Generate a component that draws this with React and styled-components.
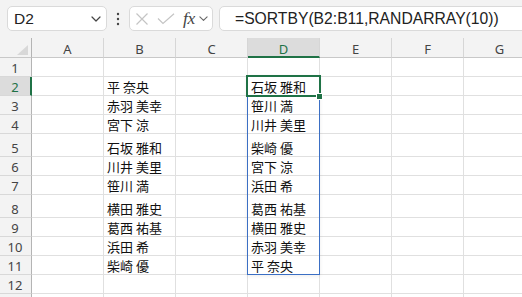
import React from 'react';
import styled, { createGlobalStyle } from 'styled-components';

const GREEN = '#1f7246';
const BLUE = '#3b6fc4';
const GRID = '#e0e0e0';
const HEAD_BG = '#f3f3f3';

const Global = createGlobalStyle`
  html, body { margin: 0; padding: 0; background: ${HEAD_BG}; overflow: hidden; }
  body { font-family: "Noto Sans", "Liberation Sans", sans-serif; }
`;

const Page = styled.div`
  width: 522px;
  height: 297px;
  overflow: hidden;
  background: ${HEAD_BG};
  display: flex;
  flex-direction: column;
`;

const Toolbar = styled.div`
  height: 38px;
  flex: none;
  display: flex;
  align-items: flex-start;
  padding: 6px 0 0 7px;
  box-sizing: border-box;
`;

const Box = styled.div`
  flex: none;
  height: 25px;
  box-sizing: border-box;
  background: #fff;
  border: 1px solid #dadada;
  border-radius: 5px;
  display: flex;
  align-items: center;
`;

const NameBox = styled(Box)`
  width: 100px;
  padding: 0 5px 0 6px;
  justify-content: space-between;
  font-family: "Liberation Sans", Arial, sans-serif;
  font-size: 15.5px;
  color: #222;
`;

const Dots = styled.div`
  flex: none;
  width: 22px;
  height: 25px;
  display: flex;
  align-items: center;
  justify-content: center;
`;

const FxBox = styled(Box)`
  width: 84px;
  padding: 0 0 0 5px;
`;

const FxText = styled.span`
  font-family: "Liberation Serif", "Times New Roman", serif;
  font-style: italic;
  font-size: 17.5px;
  color: #444;
  margin-left: 8px;
  letter-spacing: -0.3px;
`;

const SmallChev = styled.span`
  margin-left: 4px;
  display: flex;
`;

const FormulaBox = styled(Box)`
  width: 330px;
  margin-left: 6px;
  padding-left: 15px;
  font-family: "Liberation Sans", Arial, sans-serif;
  font-size: 15.7px;
  color: #222;
  border-radius: 5px 0 0 5px;
`;

const Sheet = styled.div`
  display: grid;
  grid-template-columns: 32px repeat(7, 72px);
  grid-template-rows: 20px 19px 19px 19px 19px 23px 19px 19px 23px 19px 19px 19px 19px 19px;
  background: #fff;
`;

const Corner = styled.div`
  grid-row: 1;
  grid-column: 1;
  background: ${HEAD_BG};
  border-right: 1px solid #b4b4b4;
  border-bottom: 1px solid #c8c8c8;
  box-sizing: border-box;
  display: flex;
  align-items: flex-end;
  justify-content: flex-end;
  padding: 0 3px 2px 0;
`;

const ColHead = styled.div`
  grid-row: 1;
  grid-column: ${p => p.$col};
  background: ${p => (p.$active ? '#dcdcdc' : HEAD_BG)};
  border-right: 1px solid #d6d6d6;
  border-bottom: ${p => (p.$active ? `2px solid ${GREEN}` : '1px solid #c8c8c8')};
  box-sizing: border-box;
  display: flex;
  align-items: center;
  justify-content: center;
  padding-top: ${p => (p.$active ? '3px' : '2px')};
  font-size: 13px;
  color: ${p => (p.$active ? GREEN : '#444')};
`;

const RowHead = styled.div`
  grid-row: ${p => p.$row};
  grid-column: 1;
  background: ${p => (p.$active ? '#dcdcdc' : HEAD_BG)};
  border-right: ${p => (p.$active ? `2px solid ${GREEN}` : '1px solid #b4b4b4')};
  border-bottom: 1px solid #d8d8d8;
  box-sizing: border-box;
  display: flex;
  align-items: flex-end;
  justify-content: center;
  padding-right: ${p => (p.$active ? '0' : '1px')};
  font-size: 13px;
  line-height: 15px;
  color: ${p => (p.$active ? GREEN : '#444')};
`;

const Cell = styled.div`
  grid-row: ${p => p.$row};
  grid-column: ${p => p.$col};
  border-right: 1px solid ${GRID};
  border-bottom: 1px solid ${GRID};
  box-sizing: border-box;
  display: flex;
  align-items: flex-end;
  padding: 0 2px 1px 3px;
  font-family: "Noto Sans CJK JP", "Noto Sans", sans-serif;
  font-size: 13px;
  line-height: 15px;
  color: #111;
  white-space: nowrap;
  overflow: hidden;
`;

const RangeBox = styled.div`
  grid-column: 5;
  grid-row: 3 / span 10;
  margin: -1px 0 0 -1px;
  border: 1px solid ${BLUE};
  box-sizing: border-box;
  pointer-events: none;
  box-shadow: 0 1px 4px rgba(0, 0, 0, 0.08);
  z-index: 1;
`;

const SelBox = styled.div`
  grid-column: 5;
  grid-row: 3;
  margin: -2px -1px -1px -2px;
  border: 2px solid ${GREEN};
  box-sizing: border-box;
  position: relative;
  pointer-events: none;
  z-index: 2;
`;

const Handle = styled.div`
  position: absolute;
  right: -4px;
  bottom: -5px;
  width: 7px;
  height: 7px;
  box-sizing: border-box;
  background: ${GREEN};
  border: 1px solid #fff;
`;

const cols = ['A', 'B', 'C', 'D', 'E', 'F', 'G'];

const colB = ['平 奈央', '赤羽 美幸', '宮下 涼', '石坂 雅和', '川井 美里', '笹川 満', '横田 雅史', '葛西 祐基', '浜田 希', '柴崎 優'];
const colD = ['石坂 雅和', '笹川 満', '川井 美里', '柴崎 優', '宮下 涼', '浜田 希', '葛西 祐基', '横田 雅史', '赤羽 美幸', '平 奈央'];

const Chevron = ({ size = 10, color = '#444' }) => (
  <svg width={size} height={size * 0.6} viewBox="0 0 10 6" fill="none">
    <path d="M1 1 L5 5 L9 1" stroke={color} strokeWidth="1.2" strokeLinecap="round" strokeLinejoin="round" />
  </svg>
);

export default function App() {
  const rows = [];
  for (let r = 1; r <= 13; r++) {
    rows.push(
      <RowHead key={`h${r}`} $row={r + 1} $active={r === 2}>{r <= 12 ? r : ''}</RowHead>
    );
    cols.forEach((c, i) => {
      let v = '';
      if (r >= 2 && r <= 11) {
        if (c === 'B') v = colB[r - 2];
        if (c === 'D') v = colD[r - 2];
      }
      rows.push(<Cell key={`${c}${r}`} $row={r + 1} $col={i + 2}>{v}</Cell>);
    });
  }

  return (
    <Page>
      <Global />
      <Toolbar>
        <NameBox>
          <span>D2</span>
          <Chevron size={10} color="#444" />
        </NameBox>
        <Dots>
          <svg width="4" height="14" viewBox="0 0 4 14">
            <circle cx="2" cy="2" r="1.2" fill="#444" />
            <circle cx="2" cy="7" r="1.2" fill="#444" />
            <circle cx="2" cy="12" r="1.2" fill="#444" />
          </svg>
        </Dots>
        <FxBox>
          <svg width="14" height="14" viewBox="0 0 14 14" fill="none">
            <path d="M1.5 1.5 L12.5 12.5 M12.5 1.5 L1.5 12.5" stroke="#c4c4c4" strokeWidth="1.2" />
          </svg>
          <svg width="18" height="12" viewBox="0 0 18 12" fill="none" style={{ marginLeft: 8 }}>
            <path d="M1 5.5 L6 10.5 L17 0.8" stroke="#c4c4c4" strokeWidth="1.2" />
          </svg>
          <FxText>fx</FxText>
          <SmallChev>
            <Chevron size={9} color="#666" />
          </SmallChev>
        </FxBox>
        <FormulaBox>=SORTBY(B2:B11,RANDARRAY(10))</FormulaBox>
      </Toolbar>
      <Sheet>
        <Corner>
          <svg width="11" height="10" viewBox="0 0 11 10">
            <path d="M0 10 L11 0 L11 10 Z" fill="#d8d8d8" />
          </svg>
        </Corner>
        {cols.map((c, i) => (
          <ColHead key={c} $col={i + 2} $active={c === 'D'}>{c}</ColHead>
        ))}
        {rows}
        <RangeBox />
        <SelBox>
          <Handle />
        </SelBox>
      </Sheet>
    </Page>
  );
}
